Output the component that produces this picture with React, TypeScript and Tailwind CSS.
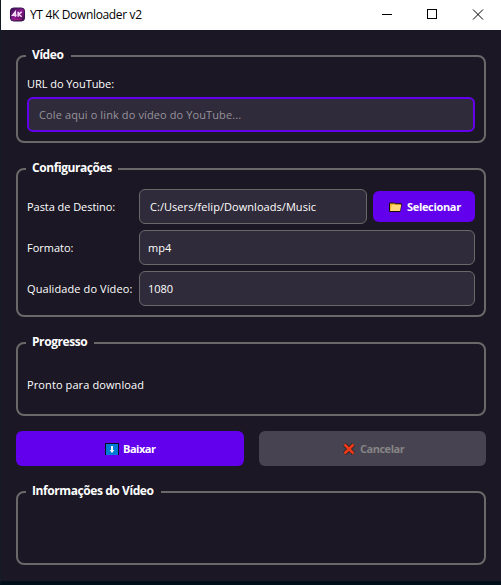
import type { ReactNode } from "react";

function Group({ title, titleClass, className, children }: { title: string; titleClass: string; className: string; children?: ReactNode }) {
  return (
    <section className={`relative rounded-[8px] border-2 border-[#696969] ${className}`}>
      <h2 className={`absolute -top-[11px] left-2 flex h-[18px] items-center whitespace-nowrap bg-[#1b1724] pl-1.5 text-[12px] font-bold tracking-[-0.42px] text-white ${titleClass}`}>
        {title}
      </h2>
      {children}
    </section>
  );
}

function Label({ children, className }: { children: ReactNode; className: string }) {
  return <span className={`block whitespace-nowrap text-[11px] leading-4 text-white ${className}`}>{children}</span>;
}

function Field({ children, className }: { children: ReactNode; className: string }) {
  return (
    <div className={`flex h-[35px] items-center rounded-[6px] border border-[#696969] bg-[#302b3a] text-[11px] leading-4 whitespace-nowrap text-white ${className}`}>
      {children}
    </div>
  );
}

function AppIcon() {
  return (
    <svg width="16" height="16" viewBox="0 0 16 16">
      <defs>
        <linearGradient id="app" x1="0" y1="0" x2="1" y2="1">
          <stop offset="0" stopColor="#35104f" />
          <stop offset=".5" stopColor="#8b1a91" />
          <stop offset="1" stopColor="#3a0b42" />
        </linearGradient>
      </defs>
      <rect x="1.5" y="1" width="14" height="13" rx="3" fill="url(#app)" stroke="#36154c" />
      <path d="M6.3 9.8V4.8L3.6 8.2h4M9.2 4.8v5M12.7 4.8 9.7 7.2l3 2.6" fill="none" stroke="#f5dcf5" strokeWidth="1.5" />
      <path d="M4.5 12.3h8" stroke="#b01b83" />
    </svg>
  );
}

function FolderIcon() {
  return (
    <svg width="13" height="10" viewBox="0 0 13 10">
      <path d="M.5 9.5V1h5l1 .7h5.8v1.5L11 9.5z" fill="#f3b62d" stroke="#171006" />
      <path d="M2.7 3h9.4l-1 6H1.4z" fill="#ffd679" />
    </svg>
  );
}

function DownIcon() {
  return (
    <svg className="mt-px" width="14" height="13" viewBox="0 0 14 13">
      <path d="M0 0h14v12H0z" fill="#07101e" />
      <path d="M1 1h12v11H1z" fill="#0078d7" />
      <path d="M6 3h2v4h1.4L7 10 4.6 7H6z" fill="#f4f7fa" />
    </svg>
  );
}

function CrossIcon() {
  return (
    <svg className="mt-px" width="12" height="12" viewBox="0 0 12 12">
      <path d="m1.5 1.5 9 9M10.5 1.5l-9 9" stroke="#241d20" strokeWidth="4.2" />
      <path d="m1.5 1.5 9 9M10.5 1.5l-9 9" stroke="#f03a17" strokeWidth="2.7" />
    </svg>
  );
}

export default function App() {
  return (
    <main className="flex h-[585px] w-[501px] flex-col overflow-hidden bg-[#1b1724] font-['Open_Sans','Noto_Sans',sans-serif]">
      <header className="flex h-[30px] shrink-0 items-center border-l border-[#111b24] bg-white pl-2">
        <AppIcon />
        <span className="ml-[5px] whitespace-nowrap text-[12px] leading-4 tracking-[-0.34px] text-black">YT 4K Downloader v2</span>
        <svg className="mr-[17px] ml-auto" width="102" height="12" viewBox="0 0 102 12" fill="none" stroke="#000" strokeWidth="1">
          <path d="M0 5.5h10M45.5 .5h9v9h-9z" shapeRendering="crispEdges" />
          <path d="m91 .5 10 10M101 .5l-10 10" />
        </svg>
      </header>
      <div className="flex min-h-0 flex-1 flex-col border-b-4 border-l border-b-[#000f19] border-l-[#141d26] pt-[25px] pr-[15px] pl-[15px]">
        <Group title="Vídeo" titleClass="w-[45px]" className="h-[88px] px-[9px] pt-[19px]">
          <Label className="tracking-[-0.05px]">URL do YouTube:</Label>
          <div className="mt-[5px] flex h-[35px] items-center rounded-[6px] border-2 border-[#6200ee] bg-[#302b3a] pt-px pl-2.5 text-[11px] tracking-[0.11px] whitespace-nowrap text-[#96939b]">
            Cole aqui o link do vídeo do YouTube...
          </div>
        </Group>
        <Group title="Configurações" titleClass="w-[92px]" className="mt-[25px] h-[149px] px-[9px] pt-[19px]">
          <div className="grid grid-cols-[112px_1fr] items-center gap-y-1.5">
            <Label className="tracking-[-0.05px]">Pasta de Destino:</Label>
            <div className="flex items-center gap-1.5">
              <Field className="w-[228px] pl-2.5 tracking-[0.05px]">C:/Users/felip/Downloads/Music</Field>
              <button className="flex h-[31px] w-[102px] items-center rounded-[6px] bg-[#6200ee] pl-4 text-[11px] font-bold tracking-[-0.33px] text-white">
                <FolderIcon />
                <span className="ml-[5px] pt-px">Selecionar</span>
              </button>
            </div>
            <Label className="">Formato:</Label>
            <Field className="pl-2">mp4</Field>
            <Label className="tracking-[0.1px]">Qualidade do Vídeo:</Label>
            <Field className="pl-2">1080</Field>
          </div>
        </Group>
        <Group title="Progresso" titleClass="w-[68px]" className="mt-[25px] h-[74px] px-[9px] pt-[33px]">
          <Label className="tracking-[0.1px]">Pronto para download</Label>
        </Group>
        <div className="mt-[15px] flex h-[35px] gap-[15px]">
          <button className="flex w-[228px] items-center rounded-[6px] bg-[#6200ee] pl-[89px] text-[11px] font-bold tracking-[-0.5px] text-white">
            <DownIcon />
            <span className="ml-1 pt-px">Baixar</span>
          </button>
          <button className="flex w-[227px] items-center rounded-[6px] bg-[#484350] pl-[84px] text-[11px] font-bold tracking-[-0.48px] text-[#858585]">
            <CrossIcon />
            <span className="ml-[5px] pt-px">Cancelar</span>
          </button>
        </div>
        <Group title="Informações do Vídeo" titleClass="w-[135px]" className="mt-[25px] h-[74px]" />
      </div>
    </main>
  );
}
